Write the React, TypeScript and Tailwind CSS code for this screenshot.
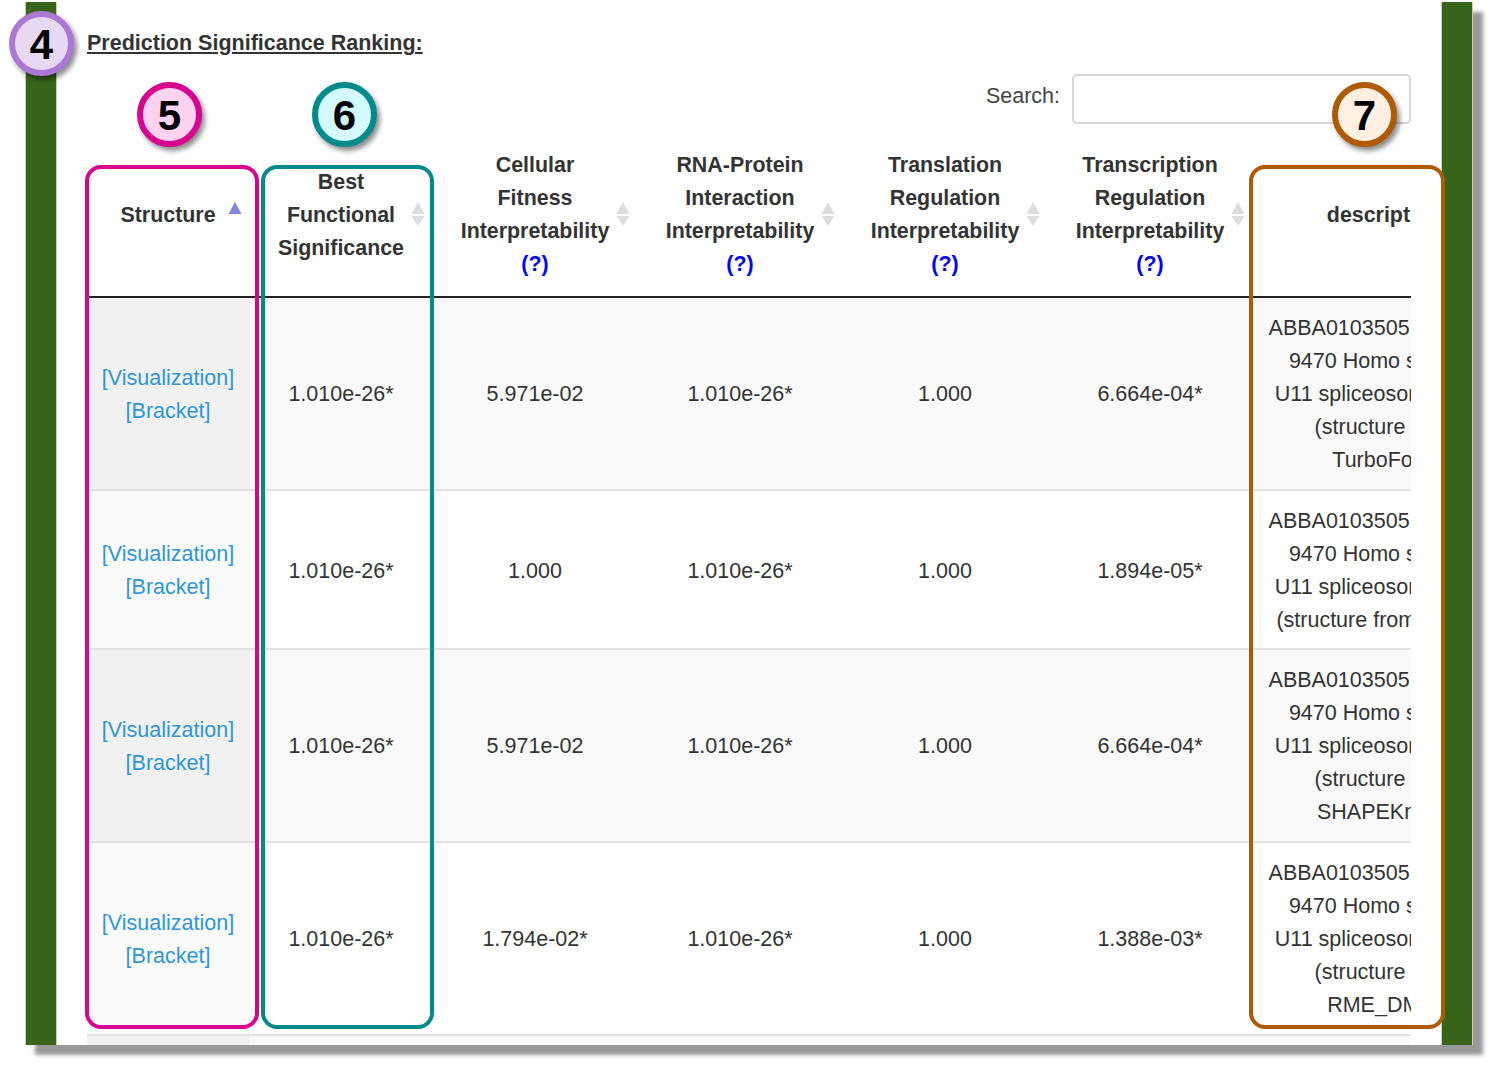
import React from 'react';

const rows = [
  { best: '1.010e-26*', cell: '5.971e-02', rna: '1.010e-26*', tl: '1.000', ts: '6.664e-04*', desc: ['(structure from', 'TurboFold)'] },
  { best: '1.010e-26*', cell: '1.000', rna: '1.010e-26*', tl: '1.000', ts: '1.894e-05*', desc: ['(structure from RNA-z)'] },
  { best: '1.010e-26*', cell: '5.971e-02', rna: '1.010e-26*', tl: '1.000', ts: '6.664e-04*', desc: ['(structure from', 'SHAPEKnots)'] },
  { best: '1.010e-26*', cell: '1.794e-02*', rna: '1.010e-26*', tl: '1.000', ts: '1.388e-03*', desc: ['(structure from', 'RME_DMS)'] },
  { best: '1.010e-26*', cell: '5.971e-02', rna: '1.010e-26*', tl: '1.000', ts: '6.664e-04*', desc: ['(structure from', 'RNAstructure)'] },
];

const SortIcon = ({ active = false }: { active?: boolean }) => (
  <svg className="absolute top-[68px] right-[8px]" width="14" height="26" viewBox="0 0 14 26">
    <path d="M7 1 L13.5 13 H0.5 Z" fill={active ? '#8484e0' : '#dddddd'} />
    {!active && <path d="M0.5 15 H13.5 L7 25 Z" fill="#dddddd" />}
  </svg>
);

const Help = () => <div className="text-[#0000ff]">(?)</div>;

const Badge = ({ n, className }: { n: string; className: string }) => (
  <div
    className={`absolute flex h-[65px] w-[65px] items-center justify-center rounded-full border-[6px] pt-[2px] text-[42px] leading-none font-bold text-black shadow-[3px_4px_5px_rgba(0,0,0,0.45)] ${className}`}
  >
    {n}
  </div>
);

const thClass = 'relative border-b-2 border-[#222] pr-[1px] pt-[16px] pb-[15px] text-center align-middle text-[21.4px] font-bold';
const tdClass = 'pr-[1px] pt-[14px] text-center align-middle';

export default function App() {
  return (
    <div className="relative h-[1066px] w-[1495px] overflow-hidden bg-white font-['Liberation_Sans',sans-serif] text-[21.5px] leading-[33px] text-[#333]">
      <div className="ml-[25px] mt-[2px] flex h-[1043px] w-[1448px] shadow-[10px_10px_4px_#999]">
        <div className="w-[32px] shrink-0 border-x border-[#c5d0bc] bg-[#38641a]" />
        <div className="min-w-0 flex-1 overflow-hidden bg-white px-[30px]">
          <div className="pt-[25px] text-[21.5px] leading-[33px] font-bold underline">Prediction Significance Ranking:</div>
          <div className="mt-[14px] flex items-center justify-end gap-[12px]">
            <span className="pb-[5px] text-[#444]">Search:</span>
            <div className="h-[50px] w-[339px] rounded-[5px] border-2 border-[#d6d6d6] bg-white" />
          </div>
          <div className="mt-[9px] w-[1324px] overflow-hidden">
            <table className="w-[1430px] table-fixed border-collapse">
              <colgroup>
                <col className="w-[163px]" />
                <col className="w-[183px]" />
                <col className="w-[205px]" />
                <col className="w-[205px]" />
                <col className="w-[205px]" />
                <col className="w-[205px]" />
                <col className="w-[264px]" />
              </colgroup>
              <thead>
                <tr>
                  <th className={thClass}>Structure<SortIcon active /></th>
                  <th className={thClass}>Best<br />Functional<br />Significance<SortIcon /></th>
                  <th className={thClass}>Cellular<br />Fitness<br />Interpretability<Help /><SortIcon /></th>
                  <th className={thClass}>RNA-Protein<br />Interaction<br />Interpretability<Help /><SortIcon /></th>
                  <th className={thClass}>Translation<br />Regulation<br />Interpretability<Help /><SortIcon /></th>
                  <th className={thClass}>Transcription<br />Regulation<br />Interpretability<Help /><SortIcon /></th>
                  <th className={thClass}>description</th>
                </tr>
              </thead>
              <tbody>
                {rows.map((row, i) => {
                  const td = `${tdClass} ${i === 1 ? 'pb-[11px]' : 'pb-[12px]'}`;
                  return (
                    <tr key={i} className={`border-t-2 border-[#e2e2e2] first:border-t-0 ${i % 2 === 0 ? 'bg-[#f9f9f9]' : 'bg-white'}`}>
                      <td className={`${td} text-[#2f96d8] ${i % 2 === 0 ? 'bg-[#f1f1f1]' : 'bg-[#fafafa]'}`}>
                        [Visualization]
                        <br />
                        [Bracket]
                      </td>
                      <td className={td}>{row.best}</td>
                      <td className={td}>{row.cell}</td>
                      <td className={td}>{row.rna}</td>
                      <td className={td}>{row.tl}</td>
                      <td className={td}>{row.ts}</td>
                      <td className={td}>
                        ABBA0103505 1.1/1-14.
                        <br />
                        9470 Homo sapiens
                        <br />
                        U11 spliceosomal RNA
                        {row.desc.map((line) => (
                          <React.Fragment key={line}>
                            <br />
                            {line}
                          </React.Fragment>
                        ))}
                      </td>
                    </tr>
                  );
                })}
              </tbody>
            </table>
          </div>
        </div>
        <div className="w-[32px] shrink-0 border-x border-[#c5d0bc] bg-[#38641a]" />
      </div>

      {/* annotation overlays */}
      <div className="absolute left-[85px] top-[165px] h-[864px] w-[174px] rounded-[16px] border-4 border-[#d9008f]" />
      <div className="absolute left-[261px] top-[165px] h-[864px] w-[173px] rounded-[16px] border-4 border-[#008a8c]" />
      <div className="absolute left-[1249px] top-[165px] h-[864px] w-[196px] rounded-[16px] border-4 border-[#b05a00]" />
      <Badge n="4" className="left-[9px] top-[11px] border-[#ab78d6] bg-[#e8d9f3]" />
      <Badge n="5" className="left-[137px] top-[82px] border-[#d9008f] bg-[#ffd2ef]" />
      <Badge n="6" className="left-[312px] top-[82px] border-[#008a8c] bg-[#d3fbfd]" />
      <Badge n="7" className="left-[1332px] top-[82px] border-[#b05a00] bg-[#fff0e2]" />
    </div>
  );
}
